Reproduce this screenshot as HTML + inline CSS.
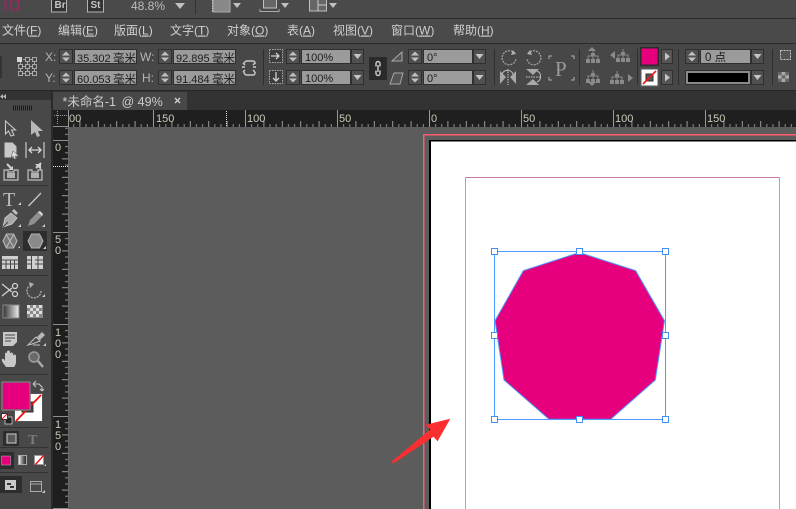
<!DOCTYPE html>
<html><head><meta charset="utf-8">
<style>
html,body{margin:0;padding:0;background:#5c5c5c;width:796px;height:509px;overflow:hidden}
svg{display:block;position:absolute;left:0;top:0}
text{font-family:"Liberation Sans","WenQuanYi Zen Hei","Noto Sans CJK SC",sans-serif}
.m{font-size:12px;fill:#cfcfcf}
.l{font-size:12px;fill:#b4b4b4}
.v{font-size:11px;fill:#1c1c1c}
.c{font-size:11.5px;fill:#1c1c1c}
.r{font-size:11px;fill:#cbcbb8}
.df{fill:#8a8a8a}
</style></head><body>
<svg width="796" height="509" viewBox="0 0 796 509" xmlns="http://www.w3.org/2000/svg">
<defs>
<g id="spin"><rect width="14" height="15" fill="#2f2f2f"/><rect x="1" y="1" width="12" height="13" fill="#505050"/><path d="M7 2.500l4 4H3zM7 12.500l4-4H3z" fill="#c0c0c0"/></g>
<g id="drop"><rect width="13" height="15" fill="#2f2f2f"/><rect x="1" y="1" width="11" height="13" fill="#505050"/><path d="M2.500 5h8l-4 5z" fill="#c4c4c4"/></g>
<g id="play"><rect width="12" height="15" fill="#2f2f2f"/><rect x="1" y="1" width="10" height="13" fill="#555"/><path d="M4 3.500l5 4-5 4z" fill="#c4c4c4"/></g>
<g id="tree"><path d="M7 0v4M2 9V6h10v3M7 4v5" fill="none" stroke="#8a8a8a"/><rect x="5" y="3" width="4" height="3" fill="#8a8a8a"/><rect y="9" width="4" height="4" fill="#8a8a8a"/><rect x="5" y="9" width="4" height="4" fill="#8a8a8a"/><rect x="10" y="9" width="4" height="4" fill="#8a8a8a"/></g>
<pattern id="hr" width="18.400" height="6" patternUnits="userSpaceOnUse" x="429" y="121"><rect width="1" height="6" fill="#9a9a9a"/><rect x="6.130" y="3" width="1" height="3" fill="#8d8d8d"/><rect x="12.260" y="3" width="1" height="3" fill="#8d8d8d"/></pattern>
<pattern id="vr" width="6" height="18.400" patternUnits="userSpaceOnUse" x="62" y="140"><rect width="6" height="1" fill="#9a9a9a"/><rect x="3" y="6.130" width="3" height="1" fill="#8d8d8d"/><rect x="3" y="12.260" width="3" height="1" fill="#8d8d8d"/></pattern>
</defs>

<!-- base -->
<rect width="796" height="509" fill="#5c5c5c"/>
<!-- top bar -->
<rect width="796" height="18" fill="#4a4a4a"/>
<rect y="18" width="796" height="1" fill="#2a2a2a"/>
<text x="2.500" y="11" font-size="22" fill="#8e2d5e">Id</text>
<rect x="51.500" y="-3" width="15" height="15" fill="#333" stroke="#b4b4b4"/>
<text x="54.500" y="8" font-size="10" fill="#c4c4c4" style="font-weight:bold">Br</text>
<rect x="87.500" y="-3" width="16" height="15" fill="#333" stroke="#b4b4b4"/>
<text x="90.500" y="8" font-size="10" fill="#c4c4c4" style="font-weight:bold">St</text>
<text x="131" y="10" font-size="12" fill="#bdbdbd">48.8%</text>
<path d="M175 3h10l-5 6z" fill="#c0c0c0"/>
<rect x="195" y="0" width="1" height="14" fill="#333"/>
<rect x="213" y="-1" width="17" height="13" fill="#888" stroke="#aaa"/><path d="M212.500 0v12" stroke="#ccc" stroke-dasharray="1.500 1"/>
<path d="M233 3h8l-4 5z" fill="#c0c0c0"/>
<rect x="263.500" y="-1" width="13" height="9" fill="#666" stroke="#c0c0c0"/><path d="M260 11.500h19M260 9v3M279 9v3" stroke="#aaa" fill="none"/>
<path d="M281 3h8l-4 5z" fill="#c0c0c0"/>
<rect x="309.500" y="-1" width="17" height="12" fill="#666" stroke="#c0c0c0"/><path d="M318 0v11M318 5h8" stroke="#ccc"/>
<path d="M329 3h8l-4 5z" fill="#c0c0c0"/>

<!-- menu bar -->
<rect y="19" width="796" height="25" fill="#4a4a4a"/>
<rect y="43" width="796" height="1" fill="#2a2a2a"/>
<text class="m" x="2" y="34.500">文件(<tspan text-decoration="underline">F</tspan>)</text>
<text class="m" x="58" y="34.500">编辑(<tspan text-decoration="underline">E</tspan>)</text>
<text class="m" x="114" y="34.500">版面(<tspan text-decoration="underline">L</tspan>)</text>
<text class="m" x="170" y="34.500">文字(<tspan text-decoration="underline">T</tspan>)</text>
<text class="m" x="227" y="34.500">对象(<tspan text-decoration="underline">O</tspan>)</text>
<text class="m" x="287" y="34.500">表(<tspan text-decoration="underline">A</tspan>)</text>
<text class="m" x="333" y="34.500">视图(<tspan text-decoration="underline">V</tspan>)</text>
<text class="m" x="391" y="34.500">窗口(<tspan text-decoration="underline">W</tspan>)</text>
<text class="m" x="453" y="34.500">帮助(<tspan text-decoration="underline">H</tspan>)</text>

<!-- control bar -->
<rect y="44" width="796" height="46" fill="#474747"/>
<rect y="90" width="796" height="1" fill="#262626"/>
<path d="M0 57h2M0 59h2M0 61h2M0 63h2M0 65h2M0 67h2M0 69h2M0 71h2M0 73h2M0 75h2M0 77h2" stroke="#1f1f1f"/>
<!-- reference point -->
<g fill="none" stroke="#a8a8a8">
<rect x="25.500" y="57.500" width="4" height="4"/><rect x="32.500" y="57.500" width="4" height="4"/>
<rect x="18.500" y="64.500" width="4" height="4"/><rect x="25.500" y="64.500" width="4" height="4"/><rect x="32.500" y="64.500" width="4" height="4"/>
<rect x="18.500" y="71.500" width="4" height="4"/><rect x="25.500" y="71.500" width="4" height="4"/><rect x="32.500" y="71.500" width="4" height="4"/>
<path d="M23 59.500h2M30 59.500h2M23 66.500h2M30 66.500h2M23 73.500h2M30 73.500h2M20.500 62v2M27.500 62v2M34.500 62v2M20.500 69v2M27.500 69v2M34.500 69v2"/>
</g>
<rect x="17" y="57" width="5" height="5" fill="#d8d8d8"/>
<text class="l" x="45" y="61">X:</text>
<text class="l" x="45" y="82">Y:</text>
<text class="l" x="140" y="61">W:</text>
<text class="l" x="142" y="82">H:</text>
<use href="#spin" x="59" y="49"/><use href="#spin" x="59" y="70"/><use href="#spin" x="158" y="49"/><use href="#spin" x="158" y="70"/>
<g fill="#9b9b9b" stroke="#2f2f2f">
<rect x="74.500" y="49.500" width="62" height="14"/><rect x="74.500" y="70.500" width="62" height="14"/>
<rect x="173.500" y="49.500" width="62" height="14"/><rect x="173.500" y="70.500" width="62" height="14"/>
</g>
<text class="v" x="77" y="62">35.302</text><text class="c" x="113" y="62">毫米</text>
<text class="v" x="77" y="83">60.053</text><text class="c" x="113" y="83">毫米</text>
<text class="v" x="176" y="62">92.895</text><text class="c" x="212" y="62">毫米</text>
<text class="v" x="176" y="83">91.484</text><text class="c" x="212" y="83">毫米</text>
<!-- link -->
<path d="M246 61h7a2 2 0 0 1 2 2v1M246 75h7a2 2 0 0 0 2-2v-1M247 61a3 3 0 0 0-3 3M247 75a3 3 0 0 1-3-3M242 67h3M253 67h3M243 63l2 2M243 72l2-2M255 63l-2 2M255 72l-2-2" fill="none" stroke="#c8c8c8" stroke-width="1.500"/>
<rect x="263" y="49" width="1" height="36" fill="#2f2f2f"/>
<rect x="269.500" y="49.500" width="13" height="13" fill="#3c3c3c" stroke="#a8a8a8" stroke-dasharray="1.500 1"/>
<path d="M271 56h8M276 53l3 3-3 3" fill="none" stroke="#d0d0d0" stroke-width="1.300"/>
<rect x="269.500" y="70.500" width="13" height="13" fill="#3c3c3c" stroke="#a8a8a8" stroke-dasharray="1.500 1"/>
<path d="M276 72v9M273 78l3 3 3-3" fill="none" stroke="#d0d0d0" stroke-width="1.300"/>
<use href="#spin" x="286" y="49"/><use href="#spin" x="286" y="70"/>
<g fill="#9b9b9b" stroke="#2f2f2f"><rect x="301.500" y="49.500" width="49" height="14"/><rect x="301.500" y="70.500" width="49" height="14"/></g>
<text class="v" x="305" y="61">100%</text><text class="v" x="305" y="82">100%</text>
<use href="#drop" x="351" y="49"/><use href="#drop" x="351" y="70"/>
<rect x="369" y="57" width="18" height="23" fill="#2a2a2a"/>
<path d="M376 66.500v-3a2 2 0 0 1 2-2a2 2 0 0 1 2 2v3M376 70.500v3a2 2 0 0 0 2 2a2 2 0 0 0 2-2v-3M378 65v7" fill="none" stroke="#d0d0d0" stroke-width="1.400"/>
<path d="M392 61l10-9v9zM390 84l4-11h9l-3 11z" fill="#555" stroke="#a8a8a8"/>
<use href="#spin" x="408" y="49"/><use href="#spin" x="408" y="70"/>
<g fill="#9b9b9b" stroke="#2f2f2f"><rect x="423.500" y="49.500" width="49" height="14"/><rect x="423.500" y="70.500" width="49" height="14"/></g>
<text class="v" x="427" y="61">0°</text><text class="v" x="427" y="82">0°</text>
<use href="#drop" x="473" y="49"/><use href="#drop" x="473" y="70"/>
<rect x="494" y="49" width="1" height="36" fill="#2f2f2f"/>
<!-- rotate -->
<path d="M515 54a7 7 0 1 0 1 5" fill="none" stroke="#a0a0a0" stroke-width="1.300" stroke-dasharray="2 1"/>
<path d="M513 50l3 4-5 1z" fill="#b0b0b0"/>
<path d="M528 54a7 7 0 1 1-1 5" fill="none" stroke="#a0a0a0" stroke-width="1.300" stroke-dasharray="2 1"/>
<path d="M530 50l-3 4 5 1z" fill="#b0b0b0"/>
<!-- flip -->
<path d="M508 69v16" stroke="#ccc" stroke-dasharray="1.500 1"/>
<path d="M506 77l-6 7v-13zM510 77l6 7v-13z" fill="#a8a8a8"/>
<path d="M502 74a6 6 0 0 1 11 0" fill="none" stroke="#bbb"/>
<path d="M526 77h15" stroke="#ccc" stroke-dasharray="1.500 1"/>
<path d="M533 75l-7-6h13zM533 79l-7 6h13z" fill="#a8a8a8"/>
<path d="M537 71a6 6 0 0 1 0 11" fill="none" stroke="#bbb"/>
<!-- P -->
<path d="M549 59v-3h3M571 56h3v3M549 77v3h3M574 77v3h-3" fill="none" stroke="#b0b0b0"/>
<text x="555" y="76" font-size="21" fill="#9a9a9a" style='font-family:"Liberation Serif",serif'>P</text>
<rect x="579" y="49" width="1" height="36" fill="#2f2f2f"/>
<!-- align -->
<path d="M592 47l4 4h-8z" class="df"/><use href="#tree" x="586" y="50"/>
<path d="M610 55l5-4v8z" class="df"/><use href="#tree" x="616" y="49"/>
<use href="#tree" x="586" y="70"/><path d="M592 86l4-4h-8z" class="df"/>
<use href="#tree" x="610" y="71"/><path d="M628 74l0 8 5-4z" class="df"/>
<rect x="637" y="49" width="1" height="36" fill="#2f2f2f"/>
<!-- fill/stroke -->
<rect x="640" y="47" width="19" height="19" fill="#2c2c2c"/>
<rect x="641.500" y="48.500" width="16" height="16" fill="#e6007e"/>
<use href="#play" x="661" y="49"/>
<rect x="640" y="68" width="19" height="19" fill="#555"/>
<rect x="641.500" y="69.500" width="16" height="16" fill="#fff"/>
<rect x="646" y="74" width="7" height="7" fill="#555" stroke="#333"/>
<path d="M643 84l13-13" stroke="#f01818" stroke-width="1.600"/>
<use href="#play" x="661" y="70"/>
<rect x="678" y="49" width="1" height="36" fill="#2f2f2f"/>
<use href="#spin" x="685" y="49"/>
<rect x="700.500" y="49.500" width="50" height="14" fill="#9b9b9b" stroke="#2f2f2f"/>
<text class="c" x="705" y="61">0 点</text>
<use href="#drop" x="751" y="49"/>
<rect x="685.500" y="70.500" width="65" height="14" fill="#8a8a8a" stroke="#2f2f2f"/>
<rect x="688" y="73" width="60" height="9" fill="#000"/>
<use href="#drop" x="751" y="70"/>
<rect x="772" y="49" width="1" height="36" fill="#2f2f2f"/>
<rect x="780.500" y="50.500" width="10" height="9" fill="#555" stroke="#c4c4c4" stroke-dasharray="2 1"/>
<rect x="778" y="72" width="11" height="10" fill="#aaa"/>
<path d="M778 72h3.600v3.300h-3.600zM785.200 72h3.800v3.300h-3.800zM781.600 75.300h3.600v3.300h-3.600zM778 78.600h3.600v3.400h-3.600zM785.200 78.600h3.800v3.400h-3.800z" fill="#666"/>

<!-- tab strip -->
<rect y="91" width="796" height="19" fill="#333"/>
<rect x="53" y="92" width="134" height="18" fill="#484848"/>
<text x="62.500" y="106" font-size="12.500" fill="#cacaca">*未命名-1</text>
<text x="121.500" y="106" font-size="12.500" fill="#cacaca">@ 49%</text>
<path d="M175 98l5 5M180 98l-5 5" stroke="#d0d0d0" stroke-width="1.300"/>

<!-- horizontal ruler -->
<rect x="53" y="110" width="743" height="17" fill="#1f1f1f"/>
<rect x="68" y="121" width="728" height="6" fill="url(#hr)"/>
<path d="M68.500 110v17M153.500 110v17M245.500 110v17M337.500 110v17M429.500 110v17M521.500 110v17M613.500 110v17M705.500 110v17" stroke="#9a9a9a"/>
<path d="M226.500 111v16" stroke="#e0e0e0" stroke-dasharray="1 1"/>
<text class="r" x="69" y="122">00</text><text class="r" x="156" y="122">150</text><text class="r" x="247" y="122">100</text><text class="r" x="339" y="122">50</text><text class="r" x="431" y="122">0</text><text class="r" x="523" y="122">50</text><text class="r" x="615" y="122">100</text><text class="r" x="707" y="122">150</text>

<!-- vertical ruler -->
<rect x="53" y="110" width="15" height="399" fill="#1f1f1f"/>
<rect x="62" y="127" width="6" height="382" fill="url(#vr)"/>
<path d="M53 126.500h15M53 140.500h15M53 232.500h15M53 324.500h15M53 416.500h15M53 508.500h15" stroke="#8e8e8e"/>
<path d="M53 166.500h15" stroke="#e8e8e8" stroke-dasharray="1 1"/>
<path d="M57.500 111v14M54 115.500h13" stroke="#9a9a9a" stroke-dasharray="1 1" fill="none"/>
<rect x="68" y="127" width="1" height="382" fill="#6a6a6a"/>
<g text-anchor="middle"><text class="r" x="58" y="151">0</text>
<text class="r" x="58" y="243">5</text><text class="r" x="58" y="254">0</text>
<text class="r" x="58" y="336">1</text><text class="r" x="58" y="347">0</text><text class="r" x="58" y="358">0</text>
<text class="r" x="58" y="428">1</text><text class="r" x="58" y="439">5</text><text class="r" x="58" y="450">0</text></g>

<!-- left panel -->
<rect x="0" y="91" width="51" height="418" fill="#484848"/>
<rect x="0" y="91" width="51" height="9" fill="#333"/>
<rect x="51" y="91" width="2" height="418" fill="#2a2a2a"/>
<path d="M6 94v5l-3-2.500zM3 94v5l-3-2.500z" fill="#b8b8b8"/>
<path d="M13 108h20" stroke="#1c1c1c" stroke-width="5" stroke-dasharray="1 1"/>
<g fill="#333"><rect y="185" width="48" height="1"/><rect y="275" width="48" height="1"/><rect y="325" width="48" height="1"/><rect y="374" width="48" height="1"/><rect y="427" width="48" height="1"/><rect y="447" width="48" height="1"/><rect y="472" width="48" height="1"/></g>

<!-- tools -->
<path d="M5.500 121l0 13 3-3 2.500 5 3-1-2.500-5h4z" fill="#484848" stroke="#c8c8c8" stroke-width="1.100"/>
<path d="M31 120v15l4-3 2 5 3-1-2-5h5z" fill="#b8b8b8"/>
<path d="M4.500 142.500h8l4 4v11h-12z" fill="#c8c8c8"/><path d="M13 151l6 5h-4l1 3-2 0-1-3-2 2z" fill="#e0e0e0" stroke="#484848" stroke-width=".5"/>
<path d="M26 142v16M44 142v16" stroke="#c0c0c0" stroke-width="1.300"/><path d="M29 150h12M32 147l-3 3 3 3M38 147l3 3-3 3" fill="none" stroke="#d8d8d8" stroke-width="1.300"/>
<path d="M4 170v10h14v-10h-4v2h-6v-2z" fill="none" stroke="#c0c0c0" stroke-width="1.200"/><path d="M7 164l4 4" stroke="#d0d0d0" stroke-width="2"/><path d="M8 170h5v-4z" fill="#d0d0d0"/><path d="M7 173h8v5H7z" fill="#b0b0b0"/>
<path d="M28 170v10h14v-10h-4v2h-6v-2z" fill="none" stroke="#c0c0c0" stroke-width="1.200"/><path d="M41 163l-5 5" stroke="#d0d0d0" stroke-width="2"/><path d="M35 164h6v6z" fill="#d0d0d0"/><path d="M31 173h8v5h-8z" fill="#b0b0b0"/>

<text x="3" y="206" font-size="20" fill="#bdbdbd" style='font-family:"Liberation Serif",serif'>T</text>
<path d="M18 205h3v-3z" fill="#ccc"/>
<path d="M28.500 206l12.500-13" stroke="#c8c8c8" stroke-width="1.300"/>
<path d="M3 227l2-9 6-5 6 5-5 6z" fill="#a8a8a8" stroke="#d0d0d0" stroke-width=".8"/><path d="M14 209l4 4-2 2-4-4z" fill="#c0c0c0"/><path d="M3 227l5-5" stroke="#484848"/>
<path d="M18 227h3v-3z" fill="#ccc"/>
<path d="M28 226l2-6 9-9 4 4-9 9z" fill="#8f8f8f"/><path d="M38 212l4 4 1-2-3-3z" fill="#d8d8d8"/><path d="M42 227h3v-3z" fill="#ccc"/>

<path d="M3 241l3.500-7h7l3.500 7-3.500 7h-7zM6 234l8 14M14 234l-8 14" fill="#777" stroke="#b8b8b8" stroke-width="1.100"/>
<path d="M18 248h2v-2z" fill="#ccc"/>
<rect x="23" y="231" width="24" height="20" fill="#2d2d2d"/>
<path d="M28 241l3.500-7h8l3.500 7-3.500 7h-8z" fill="#8a8a8a" stroke="#b0b0b0"/>
<path d="M43 249h3v-3z" fill="#ccc"/>

<rect x="2" y="256" width="16" height="13" fill="#d0d0d0"/>
<path d="M2 260h16M2 264h16M6 260v9M10.500 260v9M14.500 260v9" stroke="#484848" stroke-width="1"/>
<rect x="27" y="256" width="16" height="13" fill="#d0d0d0"/>
<path d="M31.500 256v13M38 256v13M35 260h8M35 264h8M27 260h4M27 264h4" stroke="#484848"/>

<circle cx="15" cy="294" r="2.500" fill="none" stroke="#d0d0d0" stroke-width="1.300"/>
<path d="M2 284l10 8M2 296l10-8" stroke="#d0d0d0" stroke-width="1.300"/><circle cx="15" cy="286" r="2.500" fill="none" stroke="#d0d0d0" stroke-width="1.300"/>
<path d="M41 291a7 7 0 1 1-12-5" fill="none" stroke="#b0b0b0" stroke-width="1.300" stroke-dasharray="2 1"/><path d="M29 282l5 2-4 4z" fill="#b0b0b0"/>
<path d="M42 297h3v-3z" fill="#ccc"/>

<defs><linearGradient id="g" x1="0" x2="1"><stop offset="0" stop-color="#333"/><stop offset="1" stop-color="#eee"/></linearGradient><linearGradient id="g2" x1="0" x2="1"><stop offset="0" stop-color="#fff"/><stop offset=".5" stop-color="#777"/><stop offset="1" stop-color="#222"/></linearGradient></defs>
<rect x="3" y="305" width="16" height="13" fill="url(#g)" stroke="#888"/>
<rect x="27" y="305" width="16" height="13" fill="#888"/>
<path d="M27 305h3v3h-3zM33 305h3v3h-3zM39 305h3v3h-3zM30 308h3v3h-3zM36 308h3v3h-3zM27 311h3v3h-3zM33 311h3v3h-3zM39 311h3v3h-3zM30 314h3v3h-3zM36 314h3v3h-3z" fill="#ddd"/>

<path d="M3 332h14v10l-4 4H3z" fill="#c8c8c8"/><path d="M5 335h10M5 338h10M5 341h6" stroke="#484848"/>
<path d="M28 345l8-8 4 4-8 3zM33 345h7" stroke="#c0c0c0" fill="none" stroke-width="1.100"/><path d="M37 337l5-5 3 3-5 5z" fill="#b8b8b8"/>
<path d="M43 346h3v-3z" fill="#ccc"/>
<path d="M6 367c-2-3-5-6-4-8 1-1 3 1 3 2l0-7c0-2 2-2 2 0l0-2c0-2 3-2 3 0v2c0-2 3-2 3 0v2c0-2 3-2 3 0l0 6c0 2-1 4-2 5z" fill="#c8c8c8"/>
<circle cx="34" cy="357" r="5" fill="#6a6a6a" stroke="#9a9a9a" stroke-width="1.600"/><path d="M38 361l5 6" stroke="#a8a8a8" stroke-width="2.500"/>

<!-- colour swatches -->
<rect x="14" y="393" width="29" height="29" fill="#555"/>
<rect x="15" y="394" width="27" height="27" fill="#fff"/>
<rect x="22" y="402" width="11" height="10" fill="#444" stroke="#333"/>
<path d="M16 421l25-26" stroke="#f01010" stroke-width="1.800"/>
<rect x="2" y="382" width="28" height="28" fill="#e6007e" stroke="#777" stroke-width="1.500"/>
<path d="M33 384h6l3 3v4M33 384l3-3M33 384l3 3M42 391l-2-2M42 391l2-2" fill="none" stroke="#c8c8c8" stroke-width="1.100"/>
<rect x="5" y="417" width="7" height="7" fill="#222" stroke="#ccc" stroke-width=".8"/>
<rect x="1.500" y="413.500" width="6" height="6" fill="#fff" stroke="#333"/><path d="M2 419l5-5" stroke="#f01010"/>

<rect x="3" y="431" width="16" height="15" fill="#2d2d2d"/>
<rect x="7" y="434" width="9" height="9" fill="#5a5a5a" stroke="#b8b8b8" stroke-width="1.200"/>
<text x="28" y="444" font-size="14" fill="#7a7a7a" style='font-family:"Liberation Serif",serif;font-weight:bold'>T</text>

<rect x="0" y="452" width="14" height="17" fill="#2d2d2d"/>
<rect x="1.500" y="456" width="9" height="9" fill="#e6007e" stroke="#bbb" stroke-width=".5"/>
<rect x="18.500" y="455.500" width="8" height="9" fill="url(#g2)" stroke="#aaa"/>
<rect x="34.500" y="455.500" width="9" height="9" fill="#fff" stroke="#999"/><path d="M35 465l9-10" stroke="#f01010" stroke-width="1.400"/>
<path d="M44 466h2v-2z" fill="#ccc"/>

<rect x="0" y="476" width="22" height="17" fill="#2d2d2d"/>
<rect x="5" y="480" width="11" height="10" fill="#c8c8c8"/><path d="M7 483h4v2H7zM10 486h4v2h-4z" fill="#333"/>
<rect x="30.500" y="481.500" width="11" height="10" fill="none" stroke="#aaa"/><path d="M31 484h10" stroke="#aaa"/>
<path d="M42 493h3v-3z" fill="#ccc"/>

<!-- document -->
<rect x="423" y="134" width="373" height="1.500" fill="#ff5a6c"/>
<rect x="423" y="134" width="1.500" height="375" fill="#f0607a"/>
<rect x="429" y="140" width="367" height="369" fill="#000"/>
<rect x="431" y="141.500" width="365" height="367.500" fill="#fff"/>
<rect x="465" y="177" width="314" height="1" fill="#c77aa8"/>
<rect x="465" y="177" width="1" height="332" fill="#a0a0f0"/>
<rect x="779" y="177" width="1" height="332" fill="#a0a0f0"/>

<!-- shape -->
<polygon points="579.300,252.500 635.700,270.700 664.500,320.700 655.300,380 610.700,419.300 549,419.300 504,380 495,320.700 523.300,270.700" fill="#e6007e" stroke="#4a9bff" stroke-width="1"/>
<rect x="494.500" y="251.500" width="171" height="168" fill="none" stroke="#4a9bff"/>
<g fill="#fff" stroke="#3f8ff5">
<rect x="491.500" y="248.500" width="6" height="6"/><rect x="576.500" y="248.500" width="6" height="6"/><rect x="662.500" y="248.500" width="6" height="6"/>
<rect x="491.500" y="332.500" width="6" height="6"/><rect x="662.500" y="332.500" width="6" height="6"/>
<rect x="491.500" y="416.500" width="6" height="6"/><rect x="576.500" y="416.500" width="6" height="6"/><rect x="662.500" y="416.500" width="6" height="6"/>
</g>

<!-- arrow -->
<polygon points="392,461.500 393,463.500 433.500,436.500 437.500,441 450,419 425.500,425 430.500,429.500" fill="#fb2f2f" stroke="#fb2f2f" stroke-width=".4"/>
</svg>
</body></html>
